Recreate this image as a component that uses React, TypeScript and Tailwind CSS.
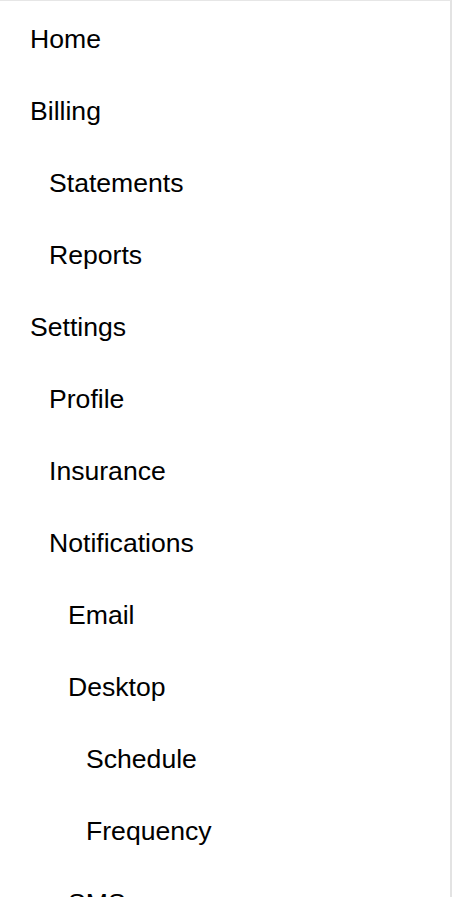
export default function App() {
  const items = [
    { label: 'Home', level: 0 },
    { label: 'Billing', level: 0 },
    { label: 'Statements', level: 1 },
    { label: 'Reports', level: 1 },
    { label: 'Settings', level: 0 },
    { label: 'Profile', level: 1 },
    { label: 'Insurance', level: 1 },
    { label: 'Notifications', level: 1 },
    { label: 'Email', level: 2 },
    { label: 'Desktop', level: 2 },
    { label: 'Schedule', level: 3 },
    { label: 'Frequency', level: 3 },
    { label: 'SMS', level: 2 },
  ];
  const pad = ['pl-[30px]', 'pl-[49px]', 'pl-[68px]', 'pl-[86px]'];

  return (
    <div className="h-[897px] w-[452px] overflow-hidden bg-white">
      <nav className="h-full w-[452px] border-t border-r-2 border-t-[#e6e6e6] border-r-[#e3e3e3] bg-white pt-[3px] font-['Liberation_Sans',Arial,sans-serif] text-[26.6px] text-black">
        <ul>
          {items.map((item) => (
            <li key={item.label} className={`flex h-[72px] items-center ${pad[item.level]}`}>
              {item.label}
            </li>
          ))}
        </ul>
      </nav>
    </div>
  );
}
